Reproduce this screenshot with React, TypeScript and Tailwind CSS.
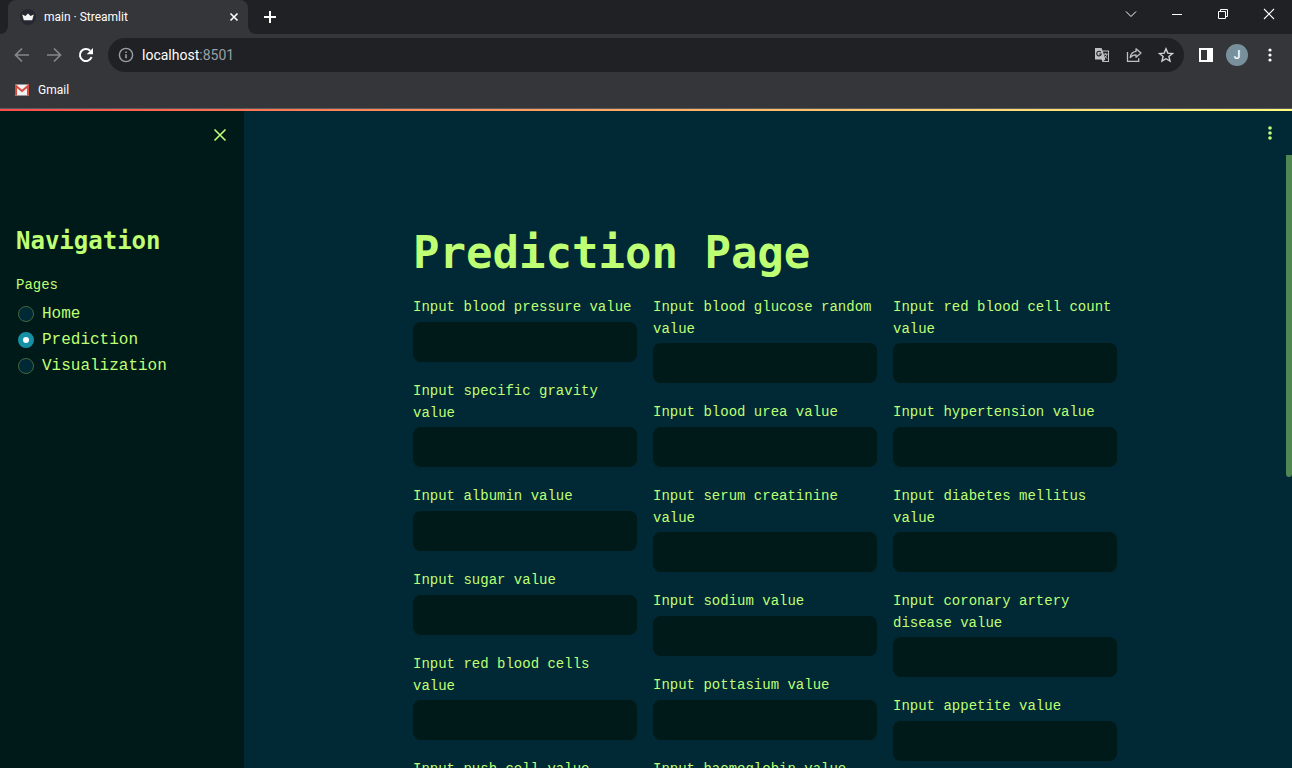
import React from 'react';

const Crown = () => (
  <svg viewBox="0 0 16 16" className="size-4">
    <circle cx="8" cy="8" r="8" fill="#262730" />
    <path d="M2.2 5.4 5.4 7 8 4.6l2.6 2.4 3.2-1.6-1.6 5.8H3.8z" fill="#f4f4f4" />
  </svg>
);

const iconBtn = 'flex items-center justify-center';

function TabStrip() {
  return (
    <div className="flex h-[34px] items-stretch bg-[#202124] text-white">
      <div className="w-2 bg-[#35363a]">
        <div className="h-full rounded-br-lg bg-[#202124]" />
      </div>
      <div className="flex w-60 items-center rounded-t-lg bg-[#35363a] pl-3 pr-1.5">
        <Crown />
        <span className="ml-2 flex-1 text-xs">main · Streamlit</span>
        <button aria-label="Close tab" className={`${iconBtn} size-4`}>
          <svg viewBox="0 0 16 16" className="size-4" stroke="#fff" strokeWidth="1.6">
            <path d="M4.5 4.5l7 7M11.5 4.5l-7 7" />
          </svg>
        </button>
      </div>
      <div className="w-2 bg-[#35363a]">
        <div className="h-full rounded-bl-lg bg-[#202124]" />
      </div>
      <button aria-label="New tab" className={`${iconBtn} w-7`}>
        <svg viewBox="0 0 16 16" className="size-4" stroke="#fff" strokeWidth="2">
          <path d="M8 2v12M2 8h12" />
        </svg>
      </button>
      <div className="ml-auto flex h-7">
        <button aria-label="Search tabs" className={`${iconBtn} w-[46px]`}>
          <svg viewBox="0 0 12 12" className="size-3" fill="none" stroke="#fff">
            <path d="M1 3.5l5 5 5-5" />
          </svg>
        </button>
        <button aria-label="Minimize" className={`${iconBtn} w-[46px]`}>
          <svg viewBox="0 0 12 12" className="size-3" stroke="#fff">
            <path d="M1 6.5h10" />
          </svg>
        </button>
        <button aria-label="Restore" className={`${iconBtn} w-[46px]`}>
          <svg viewBox="0 0 12 12" className="size-3" fill="none" stroke="#fff">
            <path d="M1.5 3.5h7v7h-7zM3.5 3.5v-2h7v7h-2" />
          </svg>
        </button>
        <button aria-label="Close window" className={`${iconBtn} w-[46px]`}>
          <svg viewBox="0 0 12 12" className="size-3" stroke="#fff" strokeWidth="1.1">
            <path d="M1 1l10 10M11 1L1 11" />
          </svg>
        </button>
      </div>
    </div>
  );
}

function Toolbar() {
  return (
    <div className="flex h-[42px] items-center bg-[#35363a] pl-2">
      <button aria-label="Back" className={`${iconBtn} w-7`}>
        <svg viewBox="0 0 16 16" className="size-4" fill="none" stroke="#86878a" strokeWidth="1.7">
          <path d="M15 8H2M8 1.5L1.5 8 8 14.5" />
        </svg>
      </button>
      <button aria-label="Forward" className={`${iconBtn} ml-1 w-7`}>
        <svg viewBox="0 0 16 16" className="size-4" fill="none" stroke="#86878a" strokeWidth="1.7">
          <path d="M1 8h13M8 1.5L14.5 8 8 14.5" />
        </svg>
      </button>
      <button aria-label="Reload" className={`${iconBtn} ml-1 w-7`}>
        <svg viewBox="0 0 16 16" className="size-4" fill="none" stroke="#fff" strokeWidth="2">
          <path d="M13.6 10A6 6 0 1 1 12.2 3.8" />
          <path d="M15 1v6.3H8.7z" fill="#fff" stroke="none" />
        </svg>
      </button>
      <div className="ml-2 flex h-[34px] flex-1 items-center rounded-full bg-[#202124] pl-2.5 pr-2.5">
        <svg viewBox="0 0 16 16" className="size-4" fill="none" stroke="#9aa0a6" strokeWidth="1.4">
          <circle cx="8" cy="8" r="6.6" />
          <path d="M8 7.2v4M8 4.4v1.6" strokeWidth="1.6" />
        </svg>
        <span className="ml-2 flex-1 text-sm text-white">
          localhost<span className="text-[#9aa0a6]">:8501</span>
        </span>
        <button aria-label="Translate" className={`${iconBtn} w-4`}>
          <svg viewBox="0 0 16 16" className="size-4">
            <path d="M1 1h6.5l1 2.5H15V15H8.5l-1-2.5H1z" fill="#bdc1c6" />
            <path d="M8.9 4.5H14V14H9.4l2-1.5z" fill="#202124" />
            <path d="M6.9 5.2A2.3 2.3 0 1 0 7.3 7H5.2" fill="none" stroke="#202124" strokeWidth="1.1" />
            <path d="M9.6 7.2h4M11.6 6v1.2M12.8 7.4c-.5 2-1.4 3-2.6 3.8M10.6 8.6l2.4 3" fill="none" stroke="#bdc1c6" />
          </svg>
        </button>
        <button aria-label="Share" className={`${iconBtn} ml-4 w-4`}>
          <svg viewBox="0 0 16 16" className="size-4" fill="none" stroke="#bdc1c6" strokeWidth="1.3">
            <path d="M1.5 5v9.3h11.2v-3" />
            <path d="M10 1.8L15 6l-5 4.2V7.8c-2.6 0-4.4.8-5.8 2.8.4-3.2 2.4-5.8 5.8-6.2z" strokeLinejoin="round" />
          </svg>
        </button>
        <button aria-label="Bookmark" className={`${iconBtn} ml-4 w-4`}>
          <svg viewBox="0 0 16 16" className="size-4" fill="none" stroke="#d0d2d5" strokeWidth="1.4">
            <path d="M8 1.8l1.8 4.3 4.7.4-3.6 3 1.1 4.6L8 11.7l-4 2.4 1.1-4.6-3.6-3 4.7-.4z" />
          </svg>
        </button>
      </div>
      <button aria-label="Side panel" className={`${iconBtn} ml-3.5 w-4`}>
        <svg viewBox="0 0 16 16" className="size-4">
          <path d="M1 1h14v14H1zM3 3v10h6V3z" fill="#fff" fillRule="evenodd" />
        </svg>
      </button>
      <button
        aria-label="Profile"
        className="ml-3 flex size-[22px] items-center justify-center rounded-full bg-[#78909c] text-xs font-medium text-white"
      >
        J
      </button>
      <button aria-label="Browser menu" className={`${iconBtn} ml-3.5 mr-3.5 w-4`}>
        <svg viewBox="0 0 16 16" className="size-4" fill="#fff">
          <circle cx="8" cy="3" r="1.6" />
          <circle cx="8" cy="8" r="1.6" />
          <circle cx="8" cy="13" r="1.6" />
        </svg>
      </button>
    </div>
  );
}

function Bookmarks() {
  return (
    <div className="flex h-[33px] items-center border-b border-[#5a5b5e] bg-[#35363a] px-3.5 pb-1">
      <a href="#gmail" className="flex items-center gap-2 text-xs text-white">
        <svg viewBox="0 0 16 16" className="size-4">
          <path d="M1 2.5h14v11H1z" fill="#f1f1f1" />
          <path d="M2 13.5V4L8 9l6-5v9.5" fill="none" stroke="#d54b3d" strokeWidth="2" />
        </svg>
        Gmail
      </a>
    </div>
  );
}

const pages = ['Home', 'Prediction', 'Visualization'];

function Sidebar() {
  const [page, setPage] = React.useState('Prediction');
  return (
    <aside className="w-61 shrink-0 bg-[#001a1a] px-4">
      <div className="flex h-12 items-center justify-end">
        <button aria-label="Close sidebar" className={`${iconBtn} size-4`}>
          <svg viewBox="0 0 16 16" className="size-4" stroke="#bfff73" strokeWidth="1.6">
            <path d="M2.5 2.5l11 11M13.5 2.5l-11 11" />
          </svg>
        </button>
      </div>
      <h2 className="mt-[66px] font-['DejaVu_Sans_Mono',monospace] text-2xl leading-8 font-bold">Navigation</h2>
      <fieldset className="mt-4">
        <legend className="text-sm leading-6">Pages</legend>
        <div className="mt-1">
          {pages.map((p) => (
            <label key={p} className="flex h-[26px] items-center gap-2 pl-0.5 text-base leading-[26px]">
              <input
                type="radio"
                name="page"
                checked={page === p}
                onChange={() => setPage(p)}
                className="size-4 shrink-0 appearance-none rounded-full border border-[#3f6a3c] bg-[#002835] checked:border-[5px] checked:border-[#1690a5] checked:bg-white"
              />
              {p}
            </label>
          ))}
        </div>
      </fieldset>
    </aside>
  );
}

const columns = [
  ['blood pressure', 'specific gravity', 'albumin', 'sugar', 'red blood cells', 'push cell'],
  ['blood glucose random', 'blood urea', 'serum creatinine', 'sodium', 'pottasium', 'haemoglobin'],
  ['red blood cell count', 'hypertension', 'diabetes mellitus', 'coronary artery disease', 'appetite'],
];

function Field({ name }: { name: string }) {
  return (
    <div className="flex flex-col gap-[3px]">
      <label htmlFor={name} className="min-h-[23px] text-sm leading-[22px]">
        Input {name} value
      </label>
      <input id={name} type="text" className="h-10 w-full rounded-lg bg-[#001a1a] px-3 outline-none" />
    </div>
  );
}

export default function App() {
  return (
    <div className="flex h-screen flex-col overflow-hidden font-[Roboto,sans-serif]">
      <TabStrip />
      <Toolbar />
      <Bookmarks />
      <div className="h-0.5 shrink-0 bg-linear-to-r from-[#ff4b4b] to-[#fffd80]" />
      <div className="flex min-h-0 flex-1 bg-[#002835] font-['Liberation_Mono',monospace] text-[#bfff73]">
        <Sidebar />
        <main className="min-w-0 flex-1 overflow-hidden">
          <div className="flex h-11 items-center justify-end pr-3.5">
            <button aria-label="App menu" className={`${iconBtn} size-4`}>
              <svg viewBox="0 0 16 16" className="size-4" fill="#bfff73">
                <circle cx="8" cy="3" r="1.8" />
                <circle cx="8" cy="8" r="1.8" />
                <circle cx="8" cy="13" r="1.8" />
              </svg>
            </button>
          </div>
          <div className="flex">
            <div className="mx-auto max-w-184 flex-1 px-4 pt-[71px]">
              <h1 className="font-['DejaVu_Sans_Mono',monospace] text-[44px] leading-[53px] font-bold">Prediction Page</h1>
              <div className="mt-[17px] grid grid-cols-3 gap-4">
                {columns.map((names) => (
                  <div key={names[0]} className="flex flex-col gap-[18px]">
                    {names.map((n) => (
                      <Field key={n} name={n} />
                    ))}
                  </div>
                ))}
              </div>
            </div>
            <div className="h-[322px] w-1.5 shrink-0 rounded-b-full bg-[#4f8653]" />
          </div>
        </main>
      </div>
    </div>
  );
}
